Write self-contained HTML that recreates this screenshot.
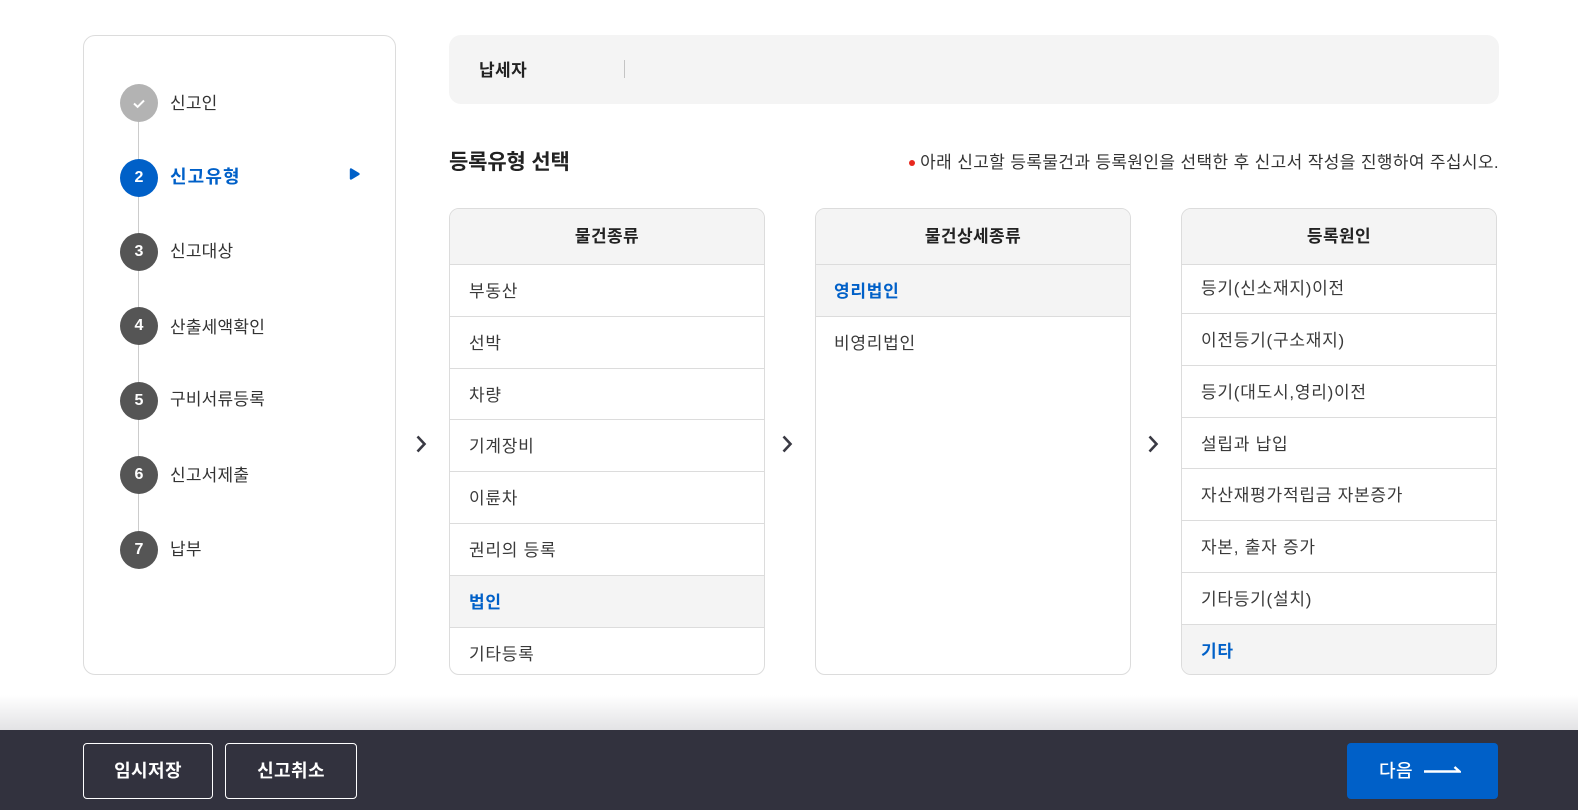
<!DOCTYPE html>
<html lang="ko"><head><meta charset="utf-8"><title>등록유형 선택</title>
<style>
*{box-sizing:border-box;margin:0;padding:0}
html,body{width:1578px;height:812px;overflow:hidden;background:#fff}
body{font-family:"Liberation Sans","Noto Sans CJK KR",sans-serif;color:#333;font-size:17px;letter-spacing:.4px}
#w{position:absolute;left:0;top:0;width:1578px;height:812px;filter:blur(.35px)}
.a{position:absolute;white-space:nowrap}
.panel{left:83px;top:35px;width:313px;height:640px;border:1px solid #dcdcdc;border-radius:12px}
.vl{left:138px;top:120px;width:1px;height:420px;background:#ccc}
.c{width:38px;height:38px;border-radius:50%;left:120px;background:#555;color:#fff;font-weight:700;font-size:16px;text-align:center;line-height:38px;letter-spacing:0}
.s{left:170px;line-height:24px;color:#333;font-size:17px;letter-spacing:.2px}
.top{left:449px;top:35px;width:1050px;height:69px;background:#f4f4f4;border-radius:12px}
.col{top:208px;width:316px;height:467px;border:1px solid #dcdcdc;border-radius:10px;overflow:hidden;background:#fff}
.h{height:56px;background:#f4f4f4;border-bottom:1px solid #dcdcdc;text-align:center;font-weight:700;line-height:56px;color:#222}
.b{height:409px;overflow:hidden}
.r{height:51.8px;border-bottom:1px solid #dcdcdc;padding-left:19px;line-height:54px;color:#3a3a3a;letter-spacing:.75px}
.r.on{background:#f4f4f4;color:#0060c8;font-weight:700;letter-spacing:.75px}
.foot{left:0;top:730px;width:1578px;height:80px;background:#32323e}
.shade{left:0;top:695px;width:1578px;height:35px;background:linear-gradient(#fff,#e3e3e5)}
.btn{top:743px;height:56px;border:1px solid #fff;border-radius:4px;color:#fff;font-weight:700;font-size:18px;text-align:center;line-height:55px}
</style></head><body><div id="w">
<div class="a shade"></div>
<div class="a panel"></div>
<div class="a vl"></div>
<div class="a c" style="top:84px;background:#b3b3b3"><svg width="38" height="38" viewBox="0 0 38 38" style="display:block"><path d="M14 19.5l3.6 3.4 6.4-6.4" fill="none" stroke="#fff" stroke-width="2"/></svg></div>
<div class="a s" style="top:92px">신고인</div>
<div class="a c" style="top:159px;background:#0060c8">2</div>
<div class="a s" style="top:165px;color:#0060c8;font-weight:700;font-size:18px;letter-spacing:1.1px">신고유형</div>
<svg class="a" style="left:349px;top:167px" width="12" height="14" viewBox="0 0 12 14"><path d="M2 2.500L9.500 7L2 11.500Z" fill="#0060c8" stroke="#0060c8" stroke-width="2.400" stroke-linejoin="round"/></svg>
<div class="a c" style="top:233px">3</div>
<div class="a s" style="top:240px">신고대상</div>
<div class="a c" style="top:307px">4</div>
<div class="a s" style="top:316px">산출세액확인</div>
<div class="a c" style="top:382px">5</div>
<div class="a s" style="top:388px">구비서류등록</div>
<div class="a c" style="top:456px">6</div>
<div class="a s" style="top:464px">신고서제출</div>
<div class="a c" style="top:531px">7</div>
<div class="a s" style="top:538px">납부</div>

<div class="a top"></div>
<div class="a" style="left:479px;top:59px;font-weight:700;line-height:24px;color:#222">납세자</div>
<div class="a" style="left:624px;top:60px;width:1px;height:18px;background:#c4c4c4"></div>
<div class="a" style="left:449px;top:147px;font-size:21px;font-weight:700;line-height:32px;color:#222;letter-spacing:-.15px">등록유형 선택</div>
<div class="a" style="left:909px;top:160px;width:6px;height:6px;border-radius:50%;background:#e8281e"></div>
<div class="a" style="right:79px;top:151px;line-height:24px;font-size:17px;letter-spacing:.36px">아래 신고할 등록물건과 등록원인을 선택한 후 신고서 작성을 진행하여 주십시오.</div>

<div class="a col" style="left:449px"><div class="h">물건종류</div><div class="b">
<div class="r">부동산</div><div class="r">선박</div><div class="r">차량</div><div class="r">기계장비</div><div class="r">이륜차</div><div class="r">권리의 등록</div><div class="r on">법인</div><div class="r">기타등록</div></div></div>
<div class="a col" style="left:815px"><div class="h">물건상세종류</div><div class="b">
<div class="r on" style="padding-left:18px">영리법인</div><div class="r" style="border:0;padding-left:18px">비영리법인</div></div></div>
<div class="a col" style="left:1181px"><div class="h">등록원인</div><div class="b"><div style="margin-top:-2.800px">
<div class="r">등기(신소재지)이전</div><div class="r">이전등기(구소재지)</div><div class="r">등기(대도시,영리)이전</div><div class="r">설립과 납입</div><div class="r">자산재평가적립금 자본증가</div><div class="r">자본, 출자 증가</div><div class="r">기타등기(설치)</div><div class="r on" style="border:0">기타</div></div></div></div>

<svg class="a" style="left:414px;top:433px" width="14" height="22" viewBox="0 0 14 22"><path d="M3.500 3.500l7 7.500-7 7.500" fill="none" stroke="#3a3a44" stroke-width="2.600"/></svg>
<svg class="a" style="left:780px;top:433px" width="14" height="22" viewBox="0 0 14 22"><path d="M3.500 3.500l7 7.500-7 7.500" fill="none" stroke="#3a3a44" stroke-width="2.600"/></svg>
<svg class="a" style="left:1146px;top:433px" width="14" height="22" viewBox="0 0 14 22"><path d="M3.500 3.500l7 7.500-7 7.500" fill="none" stroke="#3a3a44" stroke-width="2.600"/></svg>

<div class="a foot"></div>
<div class="a btn" style="left:83px;width:130px">임시저장</div>
<div class="a btn" style="left:225px;width:132px">신고취소</div>
<div class="a btn" style="left:1347px;width:151px;background:#0060c8;border:0;font-weight:500;text-align:left;padding-left:32px;line-height:56px">다음</div>
<svg class="a" style="left:1423px;top:762px" width="38" height="14" viewBox="0 0 38 14"><path d="M1 9.500H36.500L31.500 5" fill="none" stroke="#fff" stroke-width="2.400"/></svg>
</div></body></html>
